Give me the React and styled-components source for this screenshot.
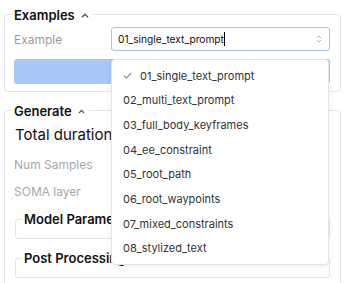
import React from 'react';
import styled, { createGlobalStyle } from 'styled-components';

const Global = createGlobalStyle`
  html, body { margin: 0; padding: 0; background: #fff; }
  body { font-family: Inter, "Noto Sans", sans-serif; color: #111; }
`;

const Page = styled.div`
  width: 346px;
  height: 283px;
  overflow: hidden;
  box-sizing: border-box;
  padding: 4px 5px 0 4px;
`;

const Section = styled.fieldset`
  margin: ${p => p.$mt || 0}px 0 0 0;
  border: 1px solid #e3e3e8;
  border-radius: 4px;
  padding: 0 10px 7px 9px;
  min-width: 0;
`;

const Legend = styled.legend`
  margin-left: -2px;
  padding: 0 4px 0 2px;
`;

const LegendInner = styled.span`
  display: inline-flex;
  align-items: center;
  gap: 6px;
  font-size: 13px;
  line-height: 17px;
  font-weight: 600;
  color: #111;
`;

const Row = styled.div`
  display: grid;
  grid-template-columns: 97px 1fr;
  align-items: center;
  margin-top: 3px;
`;

const Label = styled.span`
  font-size: 12px;
  color: #9b9b9b;
`;

const SelectWrap = styled.div`
  position: relative;
`;

const SelectBox = styled.div`
  height: 24px;
  box-sizing: border-box;
  border: 1px solid #a6c6f5;
  border-radius: 3px;
  display: flex;
  align-items: center;
  padding: 0 7px 0 6px;
  font-size: 10.2px;
  color: #111;
`;

const Caret = styled.span`
  display: inline-block;
  width: 1px;
  height: 14px;
  background: #000;
`;

const Chevrons = styled.svg`
  margin-left: auto;
`;

const Button = styled.button`
  display: block;
  width: 100%;
  height: 25px;
  margin-top: 8px;
  border: 0;
  border-radius: 3px;
  background: #a8c8fa;
`;

const Menu = styled.div`
  position: absolute;
  top: calc(100% + 8px);
  left: 0;
  right: 1px;
  z-index: 10;
  background: #fff;
  border: 1px solid #e4e4e7;
  border-radius: 4px;
  box-shadow: 0 2px 6px rgba(0, 0, 0, 0.06);
  padding: 3.5px 0;
`;

const Item = styled.div`
  height: 24.65px;
  display: flex;
  align-items: center;
  padding-left: 11px;
  font-size: 11px;
  color: #333;
  white-space: nowrap;
`;

const Check = styled.svg`
  margin-right: 8px;
`;

const Title = styled.div`
  margin-top: 6px;
  padding-left: 1px;
  font-size: 15px;
  line-height: 18px;
  color: #111;
`;

const Fields = styled.div`
  display: flex;
  flex-direction: column;
  gap: 11px;
  margin-top: 13px;
`;

const FieldLabel = styled.span`
  font-size: 12px;
  line-height: 16px;
  color: #a8a8a8;
`;

const Sub = styled.fieldset`
  margin: 11px 0 0 1px;
  border: 1px solid #e3e3e8;
  border-radius: 3px;
  padding: 0 0 11px 8px;
  min-width: 0;
`;

const SubLegend = styled.legend`
  margin-left: -2px;
  padding: 0 3px 0 2px;
  font-size: 13px;
  line-height: 16px;
  font-weight: 600;
  color: #111;
`;

const UpCaret = ({ w = 8 }) => (
  <svg width={w} height="5" viewBox="0 0 8 5">
    <path d="M1 4.3 L4 1.3 L7 4.3" fill="none" stroke="#555" strokeWidth="1.4" />
  </svg>
);

const examples = [
  '01_single_text_prompt',
  '02_multi_text_prompt',
  '03_full_body_keyframes',
  '04_ee_constraint',
  '05_root_path',
  '06_root_waypoints',
  '07_mixed_constraints',
  '08_stylized_text',
];

export default function App() {
  const selected = examples[0];
  return (
    <>
      <Global />
      <Page>
        <Section>
          <Legend>
            <LegendInner>
              Examples <UpCaret />
            </LegendInner>
          </Legend>
          <Row>
            <Label>Example</Label>
            <SelectWrap>
              <SelectBox>
                {selected}
                <Caret />
                <Chevrons width="6" height="10" viewBox="0 0 6 10">
                  <path d="M1 4 L3 2 L5 4 M1 6 L3 8 L5 6" fill="none" stroke="#b8b8b8" strokeWidth="1" />
                </Chevrons>
              </SelectBox>
              <Menu>
                {examples.map(e => (
                  <Item key={e}>
                    {e === selected && (
                      <Check width="9" height="7" viewBox="0 0 9 7">
                        <path d="M1 3.5 L3.5 6 L8 1" fill="none" stroke="#9a9a9a" strokeWidth="1.4" />
                      </Check>
                    )}
                    {e}
                  </Item>
                ))}
              </Menu>
            </SelectWrap>
          </Row>
          <Button />
        </Section>
        <Section $mt={8}>
          <Legend>
            <LegendInner>
              Generate <UpCaret w={7} />
            </LegendInner>
          </Legend>
          <Title>Total duration</Title>
          <Fields>
            <FieldLabel>Num Samples</FieldLabel>
            <FieldLabel>SOMA layer</FieldLabel>
          </Fields>
          <Sub>
            <SubLegend>Model Parameters</SubLegend>
          </Sub>
          <Sub>
            <SubLegend>Post Processing</SubLegend>
          </Sub>
        </Section>
      </Page>
    </>
  );
}
